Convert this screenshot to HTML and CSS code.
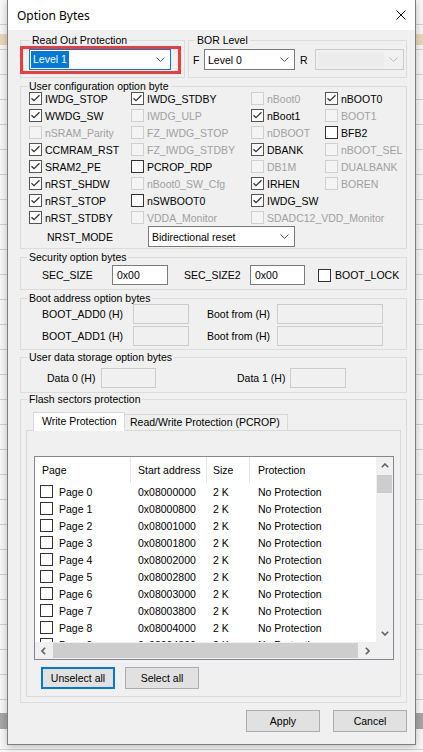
FILE: index.html
```html
<!DOCTYPE html>
<html>
<head>
<meta charset="utf-8">
<title>Option Bytes</title>
<link rel="stylesheet" href="styles.css">
</head>
<body>
<div class="screen">
  <div class="dialog">
    <div class="titlebar">
      <span class="title">Option Bytes</span>
      <svg class="close" viewBox="0 0 10 10"><path d="M0.5 0.5L9.5 9.5M9.5 0.5L0.5 9.5"/></svg>
    </div>
    <div class="body">
      <div class="toprow">
        <div class="group g-rdp">
          <div class="legend lg-rdp">Read Out Protection</div>
          <div class="combo focus c-rdp"><span class="hl">Level 1</span><svg class="chev" viewBox="0 0 9 5"><path d="M0.5 0.5L4.5 4.5L8.5 0.5"/></svg></div>
          <div class="redmark"></div>
        </div>
        <div class="group g-bor">
          <div class="legend">BOR Level</div>
          <div class="bor-row">
            <span class="fl">F</span>
            <div class="combo c-f"><span>Level 0</span><svg class="chev" viewBox="0 0 9 5"><path d="M0.5 0.5L4.5 4.5L8.5 0.5"/></svg></div>
            <span class="rl">R</span>
            <div class="combo dis c-r"><span class="dis-field"></span><svg class="chev" viewBox="0 0 9 5"><path d="M0.5 0.5L4.5 4.5L8.5 0.5"/></svg></div>
          </div>
        </div>
      </div>

      <div class="group g-user">
        <div class="legend">User configuration option byte</div>
        <div class="opts">
          <div class="opt"><span class="cb on"><svg viewBox="0 0 11 11"><path d="M1.5 5.2L4 7.7L9.5 2.2"/></svg></span><span class="t">IWDG_STOP</span></div>
          <div class="opt"><span class="cb on"><svg viewBox="0 0 11 11"><path d="M1.5 5.2L4 7.7L9.5 2.2"/></svg></span><span class="t">IWDG_STDBY</span></div>
          <div class="opt dis"><span class="cb"></span><span class="t">nBoot0</span></div>
          <div class="opt"><span class="cb on"><svg viewBox="0 0 11 11"><path d="M1.5 5.2L4 7.7L9.5 2.2"/></svg></span><span class="t">nBOOT0</span></div>

          <div class="opt"><span class="cb on"><svg viewBox="0 0 11 11"><path d="M1.5 5.2L4 7.7L9.5 2.2"/></svg></span><span class="t">WWDG_SW</span></div>
          <div class="opt dis"><span class="cb"></span><span class="t">IWDG_ULP</span></div>
          <div class="opt"><span class="cb on"><svg viewBox="0 0 11 11"><path d="M1.5 5.2L4 7.7L9.5 2.2"/></svg></span><span class="t">nBoot1</span></div>
          <div class="opt dis"><span class="cb"></span><span class="t">BOOT1</span></div>

          <div class="opt dis"><span class="cb"></span><span class="t">nSRAM_Parity</span></div>
          <div class="opt dis"><span class="cb"></span><span class="t">FZ_IWDG_STOP</span></div>
          <div class="opt dis"><span class="cb"></span><span class="t">nDBOOT</span></div>
          <div class="opt"><span class="cb"></span><span class="t">BFB2</span></div>

          <div class="opt"><span class="cb on"><svg viewBox="0 0 11 11"><path d="M1.5 5.2L4 7.7L9.5 2.2"/></svg></span><span class="t">CCMRAM_RST</span></div>
          <div class="opt dis"><span class="cb"></span><span class="t">FZ_IWDG_STDBY</span></div>
          <div class="opt"><span class="cb on"><svg viewBox="0 0 11 11"><path d="M1.5 5.2L4 7.7L9.5 2.2"/></svg></span><span class="t">DBANK</span></div>
          <div class="opt dis"><span class="cb"></span><span class="t">nBOOT_SEL</span></div>

          <div class="opt"><span class="cb on"><svg viewBox="0 0 11 11"><path d="M1.5 5.2L4 7.7L9.5 2.2"/></svg></span><span class="t">SRAM2_PE</span></div>
          <div class="opt"><span class="cb"></span><span class="t">PCROP_RDP</span></div>
          <div class="opt dis"><span class="cb"></span><span class="t">DB1M</span></div>
          <div class="opt dis"><span class="cb"></span><span class="t">DUALBANK</span></div>

          <div class="opt"><span class="cb on"><svg viewBox="0 0 11 11"><path d="M1.5 5.2L4 7.7L9.5 2.2"/></svg></span><span class="t">nRST_SHDW</span></div>
          <div class="opt dis"><span class="cb"></span><span class="t">nBoot0_SW_Cfg</span></div>
          <div class="opt"><span class="cb on"><svg viewBox="0 0 11 11"><path d="M1.5 5.2L4 7.7L9.5 2.2"/></svg></span><span class="t">IRHEN</span></div>
          <div class="opt dis"><span class="cb"></span><span class="t">BOREN</span></div>

          <div class="opt"><span class="cb on"><svg viewBox="0 0 11 11"><path d="M1.5 5.2L4 7.7L9.5 2.2"/></svg></span><span class="t">nRST_STOP</span></div>
          <div class="opt"><span class="cb"></span><span class="t">nSWBOOT0</span></div>
          <div class="opt"><span class="cb on"><svg viewBox="0 0 11 11"><path d="M1.5 5.2L4 7.7L9.5 2.2"/></svg></span><span class="t">IWDG_SW</span></div>
          <div class="opt empty"></div>

          <div class="opt"><span class="cb on"><svg viewBox="0 0 11 11"><path d="M1.5 5.2L4 7.7L9.5 2.2"/></svg></span><span class="t">nRST_STDBY</span></div>
          <div class="opt dis"><span class="cb"></span><span class="t">VDDA_Monitor</span></div>
          <div class="opt dis span2"><span class="cb"></span><span class="t">SDADC12_VDD_Monitor</span></div>
        </div>
        <div class="nrst">
          <span class="nrst-l">NRST_MODE</span>
          <div class="combo c-nrst"><span>Bidirectional reset</span><svg class="chev" viewBox="0 0 9 5"><path d="M0.5 0.5L4.5 4.5L8.5 0.5"/></svg></div>
        </div>
      </div>

      <div class="group g-sec">
        <div class="legend">Security option bytes</div>
        <div class="sec-row">
          <span class="s-l1">SEC_SIZE</span>
          <div class="inp i-s1">0x00</div>
          <span class="s-l2">SEC_SIZE2</span>
          <div class="inp i-s2">0x00</div>
          <div class="opt s-lock"><span class="cb"></span><span class="t">BOOT_LOCK</span></div>
        </div>
      </div>

      <div class="group g-boot">
        <div class="legend">Boot address option bytes</div>
        <div class="boot-row r1">
          <span class="b-l1">BOOT_ADD0 (H)</span>
          <div class="inp dis i-b1"></div>
          <span class="b-l2">Boot from (H)</span>
          <div class="inp dis i-b2"></div>
        </div>
        <div class="boot-row r2">
          <span class="b-l1">BOOT_ADD1 (H)</span>
          <div class="inp dis i-b1"></div>
          <span class="b-l2">Boot from (H)</span>
          <div class="inp dis i-b2"></div>
        </div>
      </div>

      <div class="group g-data">
        <div class="legend">User data storage option bytes</div>
        <div class="data-row">
          <span class="d-l1">Data 0 (H)</span>
          <div class="inp dis i-d1"></div>
          <span class="d-l2">Data 1 (H)</span>
          <div class="inp dis i-d2"></div>
        </div>
      </div>

      <div class="group g-flash">
        <div class="legend">Flash sectors protection</div>
        <div class="tabs">
          <div class="tab active">Write Protection</div>
          <div class="tab">Read/Write Protection (PCROP)</div>
        </div>
        <div class="panel">
          <div class="list">
            <div class="lv-main">
              <div class="lv-head">
                <div class="hc c1">Page</div>
                <div class="hc c2">Start address</div>
                <div class="hc c3">Size</div>
                <div class="hc c4">Protection</div>
              </div>
              <div class="lv-row"><div class="c1"><span class="cb"></span><span class="pg">Page 0</span></div><div class="c2">0x08000000</div><div class="c3">2 K</div><div class="c4">No Protection</div></div>
              <div class="lv-row"><div class="c1"><span class="cb"></span><span class="pg">Page 1</span></div><div class="c2">0x08000800</div><div class="c3">2 K</div><div class="c4">No Protection</div></div>
              <div class="lv-row"><div class="c1"><span class="cb"></span><span class="pg">Page 2</span></div><div class="c2">0x08001000</div><div class="c3">2 K</div><div class="c4">No Protection</div></div>
              <div class="lv-row"><div class="c1"><span class="cb"></span><span class="pg">Page 3</span></div><div class="c2">0x08001800</div><div class="c3">2 K</div><div class="c4">No Protection</div></div>
              <div class="lv-row"><div class="c1"><span class="cb"></span><span class="pg">Page 4</span></div><div class="c2">0x08002000</div><div class="c3">2 K</div><div class="c4">No Protection</div></div>
              <div class="lv-row"><div class="c1"><span class="cb"></span><span class="pg">Page 5</span></div><div class="c2">0x08002800</div><div class="c3">2 K</div><div class="c4">No Protection</div></div>
              <div class="lv-row"><div class="c1"><span class="cb"></span><span class="pg">Page 6</span></div><div class="c2">0x08003000</div><div class="c3">2 K</div><div class="c4">No Protection</div></div>
              <div class="lv-row"><div class="c1"><span class="cb"></span><span class="pg">Page 7</span></div><div class="c2">0x08003800</div><div class="c3">2 K</div><div class="c4">No Protection</div></div>
              <div class="lv-row"><div class="c1"><span class="cb"></span><span class="pg">Page 8</span></div><div class="c2">0x08004000</div><div class="c3">2 K</div><div class="c4">No Protection</div></div>
              <div class="lv-row"><div class="c1"><span class="cb"></span><span class="pg">Page 9</span></div><div class="c2">0x08004800</div><div class="c3">2 K</div><div class="c4">No Protection</div></div>
            </div>
            <div class="vscroll">
              <div class="sbtn"><svg viewBox="0 0 8 5"><path d="M0.8 4.2L4 1L7.2 4.2"/></svg></div>
              <div class="vthumb"></div>
              <div class="vtrack"></div>
              <div class="sbtn"><svg viewBox="0 0 8 5"><path d="M0.8 0.8L4 4L7.2 0.8"/></svg></div>
            </div>
            <div class="hscroll">
              <div class="sbtn"><svg class="h" viewBox="0 0 5 8"><path d="M4.2 0.8L1 4L4.2 7.2"/></svg></div>
              <div class="hthumb"></div>
              <div class="sbtn"><svg class="h" viewBox="0 0 5 8"><path d="M0.8 0.8L4 4L0.8 7.2"/></svg></div>
            </div>
            <div class="corner"></div>
          </div>
          <div class="panel-btns">
            <div class="btn default">Unselect all</div>
            <div class="btn">Select all</div>
          </div>
        </div>
      </div>

      <div class="dlg-btns">
        <div class="btn">Apply</div>
        <div class="btn">Cancel</div>
      </div>
    </div>
  </div>
</div>
</body>
</html>
```

FILE: styles.css
```css
* { box-sizing: border-box; }
html, body { margin: 0; padding: 0; }
body {
  width: 423px;
  height: 752px;
  overflow: hidden;
  font-family: "Liberation Sans", Arial, sans-serif;
  font-size: 10.5px;
  color: #000;
  background: #f0f0f0;
}
.screen {
  width: 423px;
  height: 752px;
  overflow: hidden;
  padding-left: 7px;
  background:
    linear-gradient(to bottom, transparent 713px, #a6a6a6 713px, #a6a6a6 729px, transparent 729px),
    linear-gradient(to bottom, transparent 34px, #e8d8b8 34px, #e8d8b8 45px, transparent 45px),
    repeating-linear-gradient(to bottom, #f8f8f8 0, #f8f8f8 24px, #d2d2d2 24px, #d2d2d2 25px);
}
.dialog {
  width: 409px;
  height: 745px;
  border: 1px solid #7e7e7e;
  border-top: 0;
  background: #f0f0f0;
  box-shadow: 0 2px 8px rgba(0,0,0,0.25);
}
.titlebar {
  height: 30px;
  background: #fff;
  display: flex;
  align-items: center;
  justify-content: space-between;
  padding: 0 9px 0 9px;
}
.title {
  font-family: "Noto Sans", "Open Sans", sans-serif;
  font-size: 12px;
  color: #000;
}
.close { width: 10px; height: 10px; }
.close path { stroke: #111; stroke-width: 1; fill: none; }

.body {
  height: 714px;
  padding: 10px 8px 0 12px;
}

/* group boxes */
.group {
  border: 1px solid #dcdcdc;
}
.legend {
  margin: -7px 0 0 6px;
  padding: 0 2px;
  background: #f0f0f0;
  width: max-content;
  height: 13px;
  line-height: 13px;
  white-space: nowrap;
}
.lg-rdp { margin-left: 9px; }

.toprow { display: flex; gap: 3px; height: 38px; }
.g-rdp { width: 165px; position: relative; }
.g-bor { flex: 1; }

/* combos */
.combo {
  height: 21px;
  border: 1px solid #7a7a7a;
  background: #fff;
  display: flex;
  align-items: center;
  justify-content: space-between;
  padding: 0 5px 0 3px;
  white-space: nowrap;
}
.chev { width: 9px; height: 5px; flex: none; }
.chev path { stroke: #555; stroke-width: 1; fill: none; }
.combo.focus { border-color: #0078d7; padding-left: 1px; }
.hl { background: #0078d7; color: #fff; height: 17px; line-height: 17px; padding: 0 2px; }
.combo.dis { background: #f0f0f0; border-color: #cccccc; padding-left: 2px; }
.combo.dis .chev path { stroke: #bdbdbd; }
.dis-field { width: 66px; height: 15px; background: #ececec; }
.c-rdp { width: 142px; margin: 2px 0 0 8px; }
.redmark {
  position: absolute;
  left: -1px;
  top: 5px;
  width: 161px;
  height: 28px;
  border: 3px solid #ee3b3b;
}
.bor-row {
  display: flex;
  align-items: center;
  margin-top: 2px;
  padding-left: 4px;
}
.fl { width: 11px; }
.c-f { width: 91px; }
.rl { width: 15px; margin-left: 5px; }
.c-r { width: 89px; }

/* user configuration */
.g-user { margin-top: 8px; height: 163px; }
.opts {
  display: grid;
  grid-template-columns: 102px 120px 74px 1fr;
  grid-auto-rows: 17px;
  margin-top: -3px;
  padding-left: 8px;
}
.opt { display: flex; align-items: center; white-space: nowrap; }
.opt .t { margin-left: 3px; }
.opt.dis .t { color: #a0a0a0; }
.span2 { grid-column: 3 / span 2; }

.cb {
  width: 13px;
  height: 13px;
  border: 1px solid #333;
  background: #fff;
  flex: none;
  display: inline-block;
}
.cb svg { display: block; width: 11px; height: 11px; }
.cb svg path { stroke: #333; stroke-width: 1.3; fill: none; }
.cb.on { border-color: #555; }
.opt.dis .cb { border-color: #cfcfcf; background: #f4f4f4; }

.nrst { display: flex; align-items: center; height: 21px; padding-left: 26px; }
.nrst-l { width: 101px; }
.c-nrst { width: 147px; }

/* inputs */
.inp {
  height: 20px;
  border: 1px solid #7a7a7a;
  background: #fff;
  padding-left: 4px;
  line-height: 18px;
}
.inp.dis { background: #f0f0f0; border-color: #cccccc; }

.g-sec { margin-top: 8px; height: 33px; }
.sec-row { display: flex; align-items: center; margin-top: 1px; padding-left: 21px; }
.s-l1 { width: 70px; }
.i-s1 { width: 56px; }
.s-l2 { width: 66px; margin-left: 16px; }
.i-s2 { width: 55px; }
.s-lock { margin-left: 13px; }
.s-lock .t { margin-left: 4px; }

.g-boot { margin-top: 8px; height: 52px; }
.boot-row { display: flex; align-items: center; padding-left: 21px; }
.boot-row.r1 { margin-top: -1px; }
.boot-row.r2 { margin-top: 2px; }
.b-l1 { width: 91px; }
.i-b1 { width: 56px; }
.b-l2 { width: 70px; margin-left: 18px; }
.i-b2 { width: 106px; }

.g-data { margin-top: 7px; height: 36px; }
.data-row { display: flex; align-items: center; margin-top: 4px; padding-left: 26px; }
.d-l1 { width: 54px; }
.i-d1 { width: 55px; }
.d-l2 { width: 53px; margin-left: 81px; }
.i-d2 { width: 56px; }

/* flash sectors */
.g-flash { margin-top: 6px; height: 304px; padding: 0 5px 0 5px; }
.g-flash .legend { margin-left: 1px; }
.tabs {
  display: flex;
  align-items: flex-end;
  height: 18px;
  margin-top: 6px;
  padding-left: 7px;
}
.tab {
  border: 1px solid #d9d9d9;
  border-bottom: 0;
  background: #f0f0f0;
  height: 16px;
  line-height: 15px;
  white-space: nowrap;
}
.tab.active {
  width: 92px;
  height: 19px;
  margin-bottom: -1px;
  background: #fff;
  padding-left: 8px;
  line-height: 17px;
  position: relative;
}
.tab:not(.active) { width: 163px; padding-left: 5px; border-left: 0; }
.panel {
  height: 267px;
  border: 1px solid #d9d9d9;
  padding: 25px 7px 0 7px;
}
.list {
  width: 360px;
  height: 204px;
  border: 1px solid #828790;
  background: #fff;
  display: grid;
  grid-template-columns: 341px 17px;
  grid-template-rows: 185px 17px;
}
.lv-main { overflow: hidden; }
.lv-head { display: flex; height: 26px; }
.hc {
  height: 26px;
  line-height: 26px;
  padding-left: 7px;
  border-right: 1px solid #e5e5e5;
  white-space: nowrap;
}
.c1 { width: 96px; flex: none; }
.c2 { width: 76px; flex: none; }
.c3 { width: 43px; flex: none; }
.c4 { flex: 1; }
.hc.c3 { padding-left: 6px; }
.hc.c4 { border-right: 0; padding-left: 8px; }
.lv-row { display: flex; height: 17px; align-items: center; white-space: nowrap; }
.lv-row .c1 { display: flex; align-items: center; padding-left: 5px; }
.lv-row .c2 { padding-left: 7px; }
.lv-row .c3 { padding-left: 6px; }
.lv-row .c4 { padding-left: 8px; }
.pg { margin-left: 6px; }

.vscroll {
  background: #f0f0f0;
  display: flex;
  flex-direction: column;
}
.sbtn {
  width: 17px;
  height: 17px;
  flex: none;
  display: flex;
  align-items: center;
  justify-content: center;
  background: #f0f0f0;
}
.sbtn svg { width: 8px; height: 5px; }
.sbtn svg.h { width: 5px; height: 8px; }
.sbtn path { stroke: #606060; stroke-width: 1.6; fill: none; }
.vthumb { height: 18px; margin: 1px 1px 0 1px; background: #cdcdcd; flex: none; }
.vtrack { flex: 1; }
.hscroll { display: flex; background: #f0f0f0; }
.hthumb { flex: 1; margin: 1px; background: #cdcdcd; }
.corner { background: #f0f0f0; }

.panel-btns { display: flex; gap: 10px; margin-top: 7px; padding-left: 7px; }

.btn {
  width: 74px;
  height: 22px;
  border: 1px solid #adadad;
  background: #e1e1e1;
  text-align: center;
  line-height: 20px;
  white-space: nowrap;
}
.btn.default { border: 2px solid #0078d7; line-height: 18px; }

.dlg-btns {
  display: flex;
  justify-content: flex-end;
  gap: 13px;
  margin-top: 7px;
  padding-right: 0;
}
```
